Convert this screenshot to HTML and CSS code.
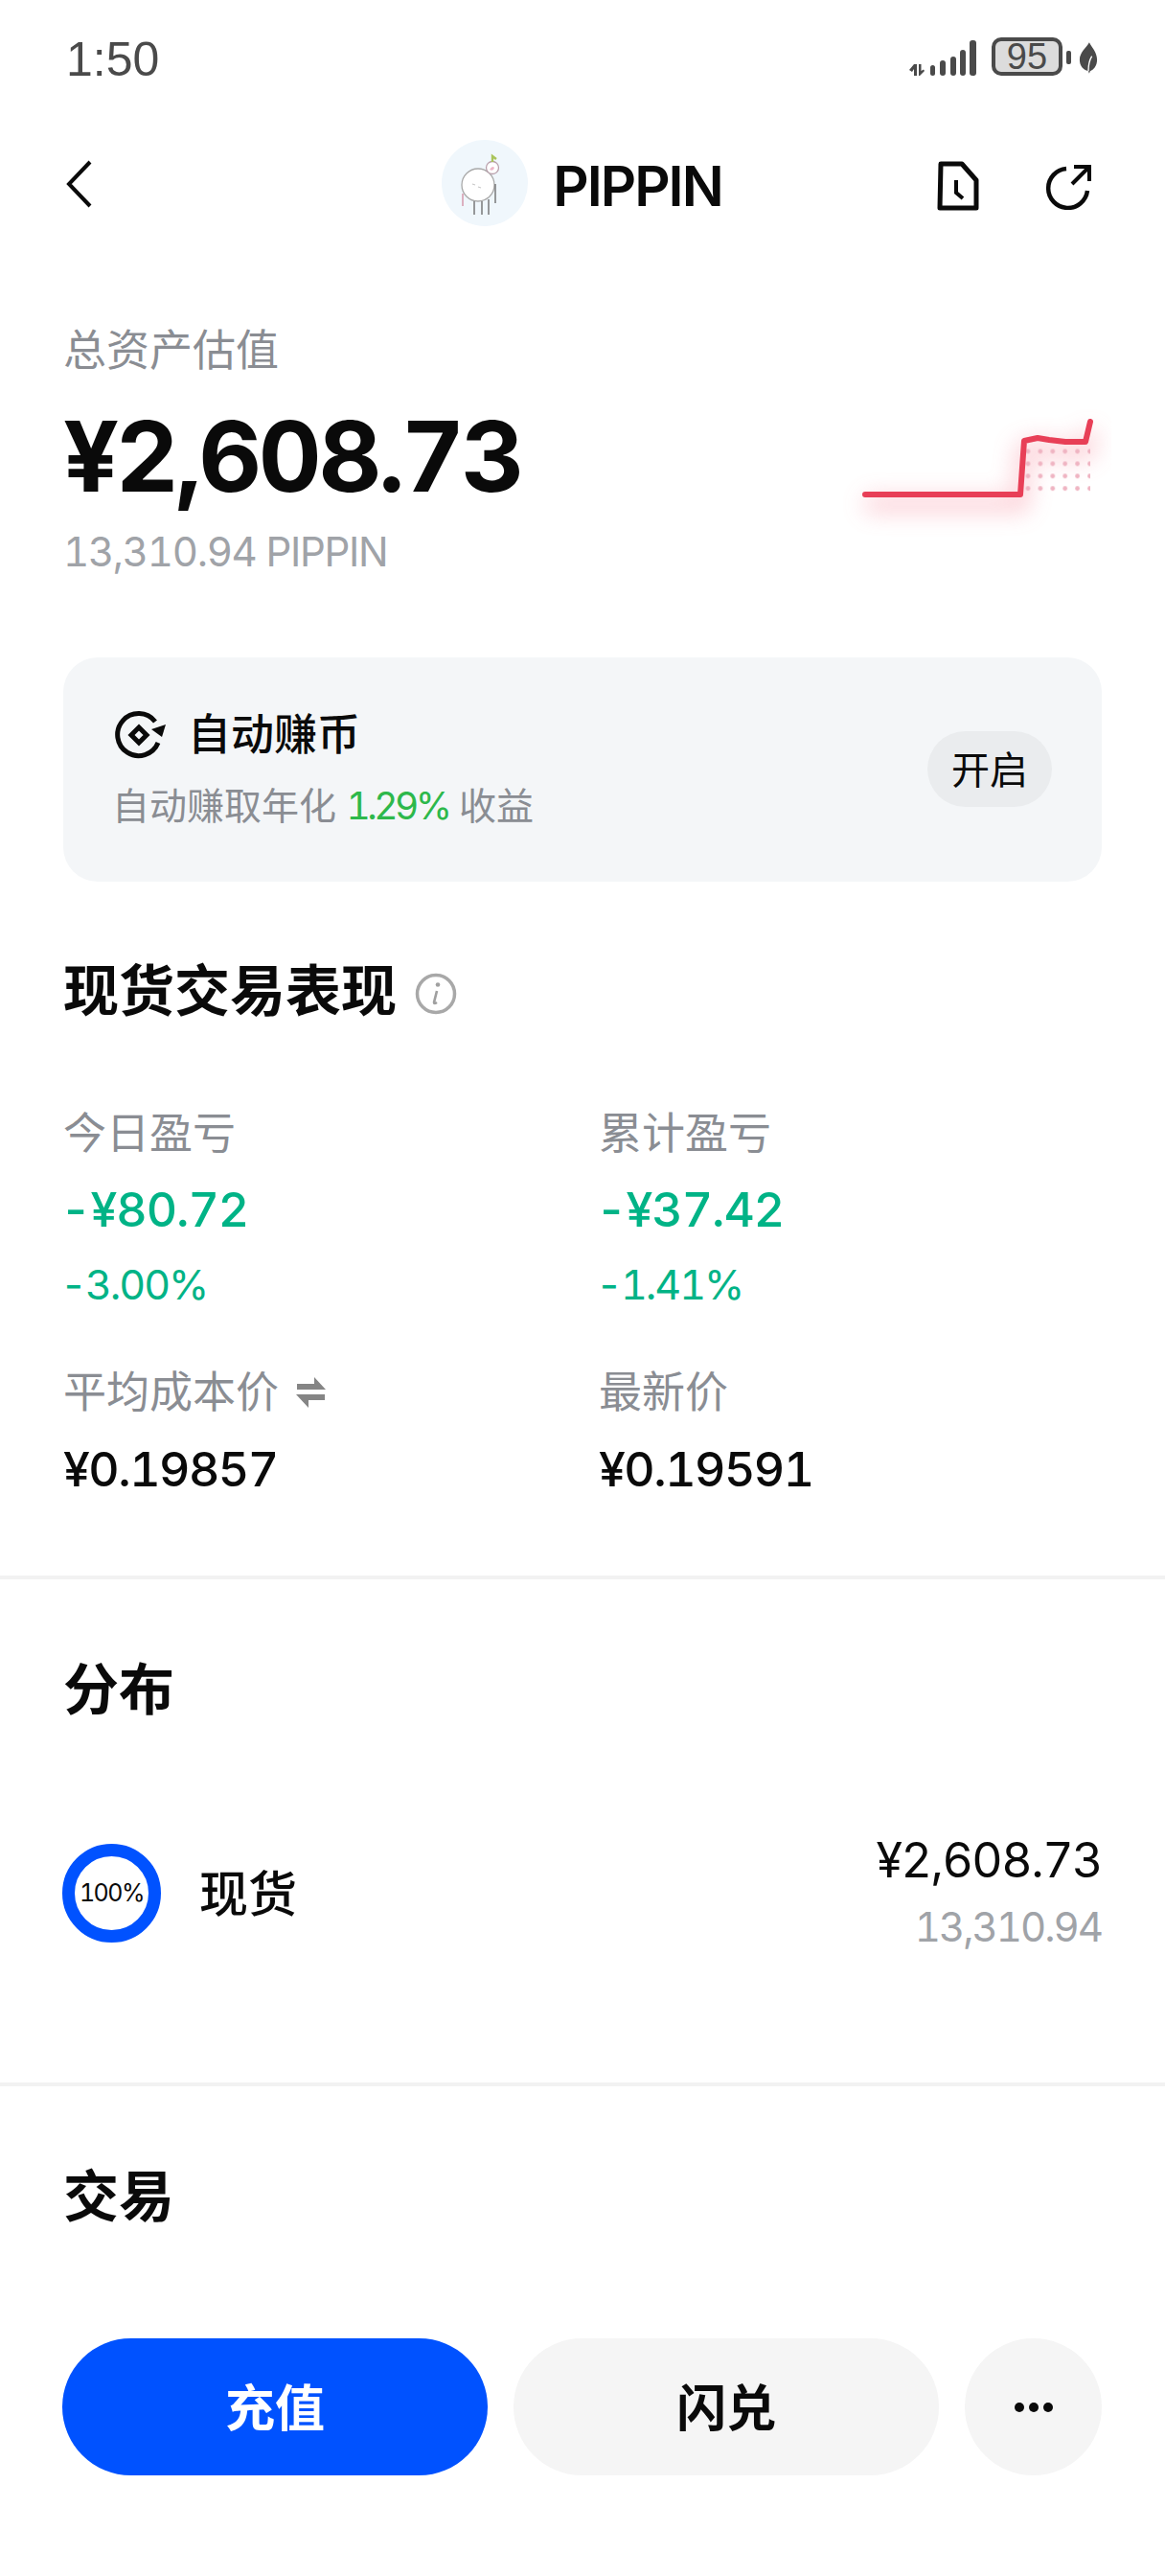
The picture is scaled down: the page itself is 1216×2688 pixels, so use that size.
FILE: index.html
```html
<!DOCTYPE html>
<html lang="zh">
<head>
<meta charset="utf-8">
<title>PIPPIN</title>
<link rel="stylesheet" href="styles.css">
</head>
<body>
<div class="page">
  <div class="status">
    <span class="time">1:50</span>
    <div class="status-icons">
      <svg class="signal" width="70" height="40" viewBox="0 0 70 40"><g fill="#4a4a4a"><path d="M0 34l5-6h3v12H5v-7l-2 3zM10 28h2.500v7l2.500-1.500 1 1.500-5 5h-1z"/><rect x="22" y="29" width="5" height="11" rx="2.500"/><rect x="32" y="24" width="6" height="16" rx="3"/><rect x="43" y="20" width="6" height="20" rx="3"/><rect x="53" y="13" width="6" height="27" rx="3"/><rect x="63" y="3" width="7" height="37" rx="3"/></g></svg>
      <div class="battery"><span>95</span></div>
      <span class="battery-tip"></span>
      <svg class="leaf" width="20" height="33" viewBox="0 0 22 36"><path d="M12 0C15 6 21 11 21 20c0 7-4 12-8 13l-1 3-1-3C5 32 1 27 1 20 1 11 9 6 12 0z" fill="#4a4a4a"/><path d="M11 33c0-7 1-12 4-17" stroke="#fff" stroke-width="1.500" fill="none"/></svg>
    </div>
  </div>

  <header class="topbar">
    <svg class="back" width="30" height="52" viewBox="0 0 30 52"><path d="M26 3L4 26l22 23" fill="none" stroke="#0a0a0a" stroke-width="4"/></svg>
    <div class="coin">
      <svg class="coin-logo" width="90" height="90" viewBox="0 0 90 90">
        <circle cx="45" cy="45" r="45" fill="#f0f7fc"/>
        <circle cx="38" cy="47" r="17" fill="#fff" stroke="#a9a9a9" stroke-width="1.300"/>
        <circle cx="53" cy="29" r="6.500" fill="#fff" stroke="#b9a0ac" stroke-width="1.300"/>
        <path d="M50 31q3-5 5-2-1 4-5 2z" fill="#eeb6c8"/>
        <path d="M53 23v-6l4 3" stroke="#a9c45a" stroke-width="2.400" fill="none"/>
        <path d="M34 64v14M42 64v14M49 62v16M56 46v20" stroke="#666" stroke-width="1.300"/>
        <path d="M22 56v13" stroke="#dcb0c0" stroke-width="2"/>
        <path d="M32 46l3 1M38 49l3 1" stroke="#c8c8c8" stroke-width="1.200"/>
      </svg>
      <span class="coin-name">PIPPIN</span>
    </div>
    <div class="top-actions">
      <svg width="44" height="52" viewBox="0 0 44 52"><path d="M4 3h22l15 17v29H3z" fill="none" stroke="#0a0a0a" stroke-width="5" stroke-linejoin="round"/><path d="M20 20v13l7 6" fill="none" stroke="#0a0a0a" stroke-width="4"/></svg>
      <svg width="48" height="50" viewBox="0 0 48 50"><path d="M22 7a20.500 20.500 0 1 0 22 23" fill="none" stroke="#0a0a0a" stroke-width="4.500"/><path d="M30 5h16v15M46 5L28 23" fill="none" stroke="#0a0a0a" stroke-width="4"/></svg>
    </div>
  </header>

  <section class="hero">
    <div class="hero-text">
      <div class="hero-label">总资产估值</div>
      <div class="hero-amount">¥2,608.73</div>
      <div class="hero-sub">13,310.94 PIPPIN</div>
    </div>
    <svg class="spark" width="310" height="150" viewBox="0 0 310 150">
      <defs>
        <filter id="glow" x="-30%" y="-60%" width="160%" height="220%"><feGaussianBlur stdDeviation="12"/></filter>
        <pattern id="dots" x="216.550" y="54.550" width="12.900" height="12.900" patternUnits="userSpaceOnUse"><circle cx="6.450" cy="6.450" r="2.400" fill="#efb4c2"/></pattern>
      </defs>
      <path d="M53 116H215L219 60L233 57L245 59L262 61H283L288 40" fill="none" stroke="#f77f92" stroke-width="16" opacity=".4" filter="url(#glow)"/>
      <rect x="218" y="55" width="70" height="52" fill="url(#dots)"/>
      <path d="M53 106H215L219 50L233 47L245 49L262 51H283L288 30" fill="none" stroke="#e83f57" stroke-width="6" stroke-linecap="round" stroke-linejoin="round"/>
    </svg>
  </section>

  <section class="earn">
    <div class="earn-text">
      <div class="earn-title">
        <svg width="54" height="50" viewBox="0 0 54 50"><path d="M45 33A22 22 0 1 1 42 11" fill="none" stroke="#0a0a0a" stroke-width="5"/><path d="M53 14l-4 13-11-8z" fill="#0a0a0a"/><path d="M25 17l8 8-8 8-8-8z" fill="none" stroke="#0a0a0a" stroke-width="5"/></svg>
        <span>自动赚币</span>
      </div>
      <div class="earn-sub">自动赚取年化 <span class="green">1.29%</span> 收益</div>
    </div>
    <div class="earn-btn">开启</div>
  </section>

  <h2 class="heading heading-spot">现货交易表现
    <svg width="44" height="44" viewBox="0 0 44 44"><circle cx="22" cy="22" r="19.500" fill="none" stroke="#a8a8a8" stroke-width="3.500"/><circle cx="24" cy="12.500" r="2.300" fill="#a0a0a0"/><path d="M23 19l-3 12q0 2 3 0" fill="none" stroke="#a0a0a0" stroke-width="2.600"/></svg>
  </h2>

  <div class="stats">
    <div class="stat">
      <div class="stat-label">今日盈亏</div>
      <div class="stat-value teal">-¥80.72</div>
      <div class="stat-pct teal">-3.00%</div>
    </div>
    <div class="stat">
      <div class="stat-label">累计盈亏</div>
      <div class="stat-value teal">-¥37.42</div>
      <div class="stat-pct teal">-1.41%</div>
    </div>
    <div class="stat">
      <div class="stat-label">平均成本价
        <svg width="32" height="32" viewBox="0 0 32 32"><path d="M1 7h18V0l12 13H1zM0 18h30v6H13v8z" fill="#858585"/></svg>
      </div>
      <div class="stat-price">¥0.19857</div>
    </div>
    <div class="stat">
      <div class="stat-label">最新价</div>
      <div class="stat-price">¥0.19591</div>
    </div>
  </div>

  <div class="divider divider-a"></div>

  <h2 class="heading heading-dist">分布</h2>
  <div class="dist">
    <div class="ring">100%</div>
    <div class="dist-name">现货</div>
    <div class="dist-values">
      <div class="dist-amount">¥2,608.73</div>
      <div class="dist-qty">13,310.94</div>
    </div>
  </div>

  <div class="divider divider-b"></div>

  <h2 class="heading heading-trade">交易</h2>
  <div class="actions">
    <div class="btn btn-primary">充值</div>
    <div class="btn btn-soft">闪兑</div>
    <div class="btn-more"><span></span><span></span><span></span></div>
  </div>
</div>
</body>
</html>
```
FILE: styles.css
```css
* { box-sizing: border-box; }
html, body { margin: 0; padding: 0; background: #fff; }
.page {
  width: 1216px;
  height: 2688px;
  overflow: hidden;
  font-family: Inter, "Noto Sans CJK SC", sans-serif;
  font-variant-numeric: tabular-nums;
  color: #0a0a0a;
}
.status {
  height: 126px;
  padding: 32px 66px 0 69px;
  display: flex;
  justify-content: space-between;
  align-items: flex-start;
}
.time { font-family: "Liberation Sans", sans-serif; font-size: 50px; line-height: 60px; color: #4a4a4a; }
.status-icons { display: flex; align-items: flex-end; height: 44px; margin-top: 3px; margin-right: 4px; }
.signal { display: block; margin-right: 16px; }
.battery {
  width: 74px; height: 40px;
  border: 4px solid #4a4a4a;
  border-radius: 10px;
  background: #dcdcdc;
  display: flex; align-items: center; justify-content: center;
}
.battery span { font-family: "Liberation Sans", sans-serif; font-size: 38px; line-height: 32px; color: #4a4a4a; }
.battery-tip { width: 5px; height: 14px; background: #4a4a4a; border-radius: 2px; margin: 0 8px 12px 4px; }
.leaf { margin-bottom: 2px; }
.topbar {
  height: 130px;
  padding: 0 77px 0 68px;
  display: flex;
  align-items: center;
  justify-content: space-between;
}
.back { display: block; margin-top: 2px; }
.coin { display: flex; align-items: center; gap: 26px; margin-left: 139px; }
.coin-logo { display: block; }
.coin-name { font-size: 58px; line-height: 70px; margin-top: 6px; font-weight: 600; letter-spacing: -2px; }
.top-actions { display: flex; align-items: center; gap: 69px; margin-top: 6px; }
.top-actions svg { display: block; }
.hero {
  padding: 80px 56px 0 66px;
  display: flex;
  justify-content: space-between;
  align-items: flex-start;
}
.hero-label { font-size: 45px; line-height: 60px; color: #8a8d93; }
.hero-amount { font-size: 102px; line-height: 110px; margin-top: 25px; font-weight: 700; letter-spacing: -3.400px; }
.hero-sub { font-size: 42px; line-height: 50px; margin-top: 20px; color: #a0a3a8; letter-spacing: -1.300px; }
.spark { display: block; margin-top: 74px; }
.earn {
  margin: 85px 66px 0;
  height: 234px;
  padding: 0 50px 0 52px;
  background: #f4f6f8;
  border-radius: 36px;
  display: flex;
  align-items: center;
  justify-content: space-between;
}
.earn-title { display: flex; align-items: center; gap: 22px; font-size: 45px; line-height: 60px; font-weight: 500; margin: -4px 0 0 2px; }
.earn-title svg { display: block; }
.earn-sub { font-size: 39px; line-height: 50px; margin-top: 19px; margin-left: -1px; color: #8a8d93; }
.green { color: #2db84b; letter-spacing: -3.500px; }
.earn-btn {
  width: 130px; height: 79px;
  border-radius: 40px;
  background: #eaecee;
  display: flex; align-items: center; justify-content: center;
  font-size: 40px;
  margin: -2px 2px 0 0;
  padding-bottom: 3px;
}
.heading {
  margin: 0 0 0 66px;
  font-size: 58px;
  line-height: 70px;
  font-weight: 700;
}
.heading-spot { margin-top: 79px; display: flex; align-items: center; gap: 19px; }
.heading-spot svg { display: block; margin-top: 6px; }
.stats {
  margin: 84px 0 0 66px;
  display: grid;
  grid-template-columns: 559px 1fr;
  row-gap: 58px;
}
.stat-label { font-size: 45px; line-height: 60px; color: #8a8d93; display: flex; align-items: center; gap: 18px; }
.stat-value { font-size: 50px; line-height: 60px; margin: 19px 0 0 -3px; font-weight: 500; letter-spacing: -1px; }
.stat-pct { font-size: 43px; line-height: 50px; margin: 23px 0 0 -3px; letter-spacing: -2px; }
.stat-price { font-size: 50px; line-height: 60px; margin-top: 20px; font-weight: 500; letter-spacing: -1.500px; }
.teal { color: #00b386; }
.divider { height: 4px; background: #f2f2f2; }
.divider-a { margin-top: 81px; }
.heading-dist { margin-top: 80px; }
.dist {
  margin: 114px 66px 0 65px;
  display: flex;
  align-items: center;
  height: 126px;
}
.ring {
  width: 103px; height: 103px;
  border: 13px solid #0052ff;
  border-radius: 50%;
  display: flex; align-items: center; justify-content: center;
  font-size: 25px; letter-spacing: -1.500px;
}
.dist-name { margin: -5px 0 0 40px; font-size: 51px; font-weight: 500; flex: 1; }
.dist-values { text-align: right; }
.dist-amount { font-size: 50px; line-height: 60px; margin-top: 2px; letter-spacing: -1.500px; }
.dist-qty { font-size: 42px; line-height: 60px; margin-top: 10px; color: #a0a3a8; letter-spacing: -2px; }
.divider-b { margin-top: 135px; }
.heading-trade { margin-top: 80px; }
.actions {
  margin: 113px 66px 0 65px;
  display: flex;
  gap: 27px;
}
.btn {
  width: 445px; height: 143px;
  border-radius: 72px;
  display: flex; align-items: center; justify-content: center;
  font-size: 52px; font-weight: 700;
  padding-bottom: 5px;
}
.btn-primary { background: #0052ff; color: #fff; }
.btn-soft { background: #f5f5f5; color: #0a0a0a; }
.btn-more {
  width: 143px; height: 143px;
  border-radius: 50%;
  background: #f5f5f5;
  display: flex; align-items: center; justify-content: center;
  gap: 5px;
}
.btn-more span { width: 10px; height: 10px; border-radius: 50%; background: #0a0a0a; }
```
